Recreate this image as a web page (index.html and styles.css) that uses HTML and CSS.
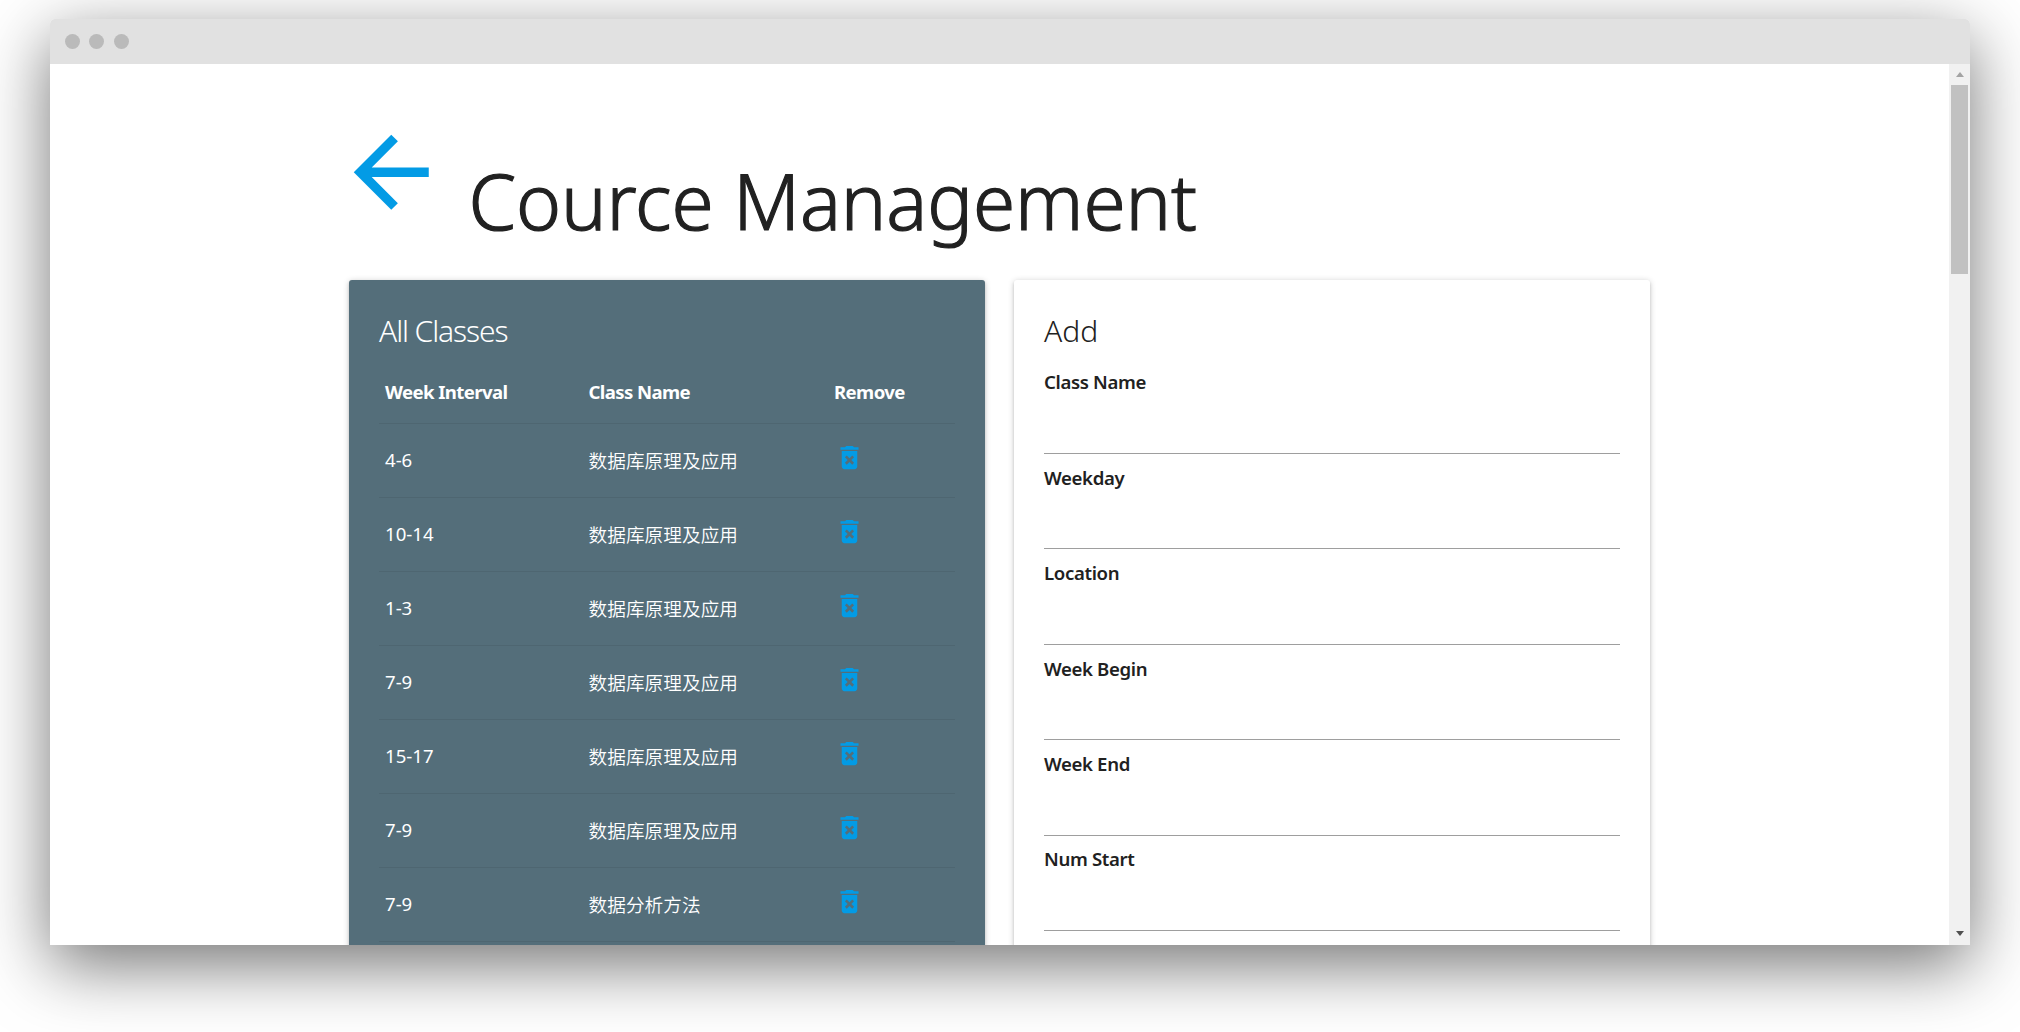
FILE: index.html
```html
<!DOCTYPE html>
<html lang="en">
<head>
<meta charset="utf-8">
<title>Cource Management</title>
<link rel="stylesheet" href="styles.css">
</head>
<body>
<svg class="defs" width="0" height="0">
  <symbol id="trash" viewBox="0 0 24 24"><path d="M6 19c0 1.100.9 2 2 2h8c1.100 0 2-.9 2-2V7H6v12zm2.460-7.120l1.410-1.410L12 12.590l2.120-2.120 1.410 1.410L13.410 14l2.120 2.120-1.410 1.410L12 15.410l-2.120 2.120-1.410-1.410L10.590 14l-2.130-2.120zM15.500 4l-1-1h-5l-1 1H5v2h14V4z"/></symbol>
</svg>
<div class="window">
  <div class="titlebar"><span class="dot"></span><span class="dot"></span><span class="dot"></span></div>
  <div class="viewport">
    <main class="page">
      <header class="heading">
        <a class="back"><svg viewBox="0 0 24 24"><path d="M20 11H7.830l5.590-5.590L12 4l-8 8 8 8 1.410-1.410L7.830 13H20v-2z"/></svg></a>
        <h1>Cource Management</h1>
      </header>
      <div class="cards">
        <section class="card card-dark">
          <h2 class="card-title">All Classes</h2>
          <div class="table">
            <div class="row head"><span>Week Interval</span><span>Class Name</span><span>Remove</span></div>
            <div class="row"><span>4-6</span><span class="zh">数据库原理及应用</span><svg><use href="#trash"/></svg></div>
            <div class="row"><span>10-14</span><span class="zh">数据库原理及应用</span><svg><use href="#trash"/></svg></div>
            <div class="row"><span>1-3</span><span class="zh">数据库原理及应用</span><svg><use href="#trash"/></svg></div>
            <div class="row"><span>7-9</span><span class="zh">数据库原理及应用</span><svg><use href="#trash"/></svg></div>
            <div class="row"><span>15-17</span><span class="zh">数据库原理及应用</span><svg><use href="#trash"/></svg></div>
            <div class="row"><span>7-9</span><span class="zh">数据库原理及应用</span><svg><use href="#trash"/></svg></div>
            <div class="row"><span>7-9</span><span class="zh">数据分析方法</span><svg><use href="#trash"/></svg></div>
            <div class="row"></div>
          </div>
        </section>
        <section class="card">
          <h2 class="card-title">Add</h2>
          <div class="field">Class Name</div>
          <div class="field">Weekday</div>
          <div class="field">Location</div>
          <div class="field">Week Begin</div>
          <div class="field">Week End</div>
          <div class="field">Num Start</div>
        </section>
      </div>
    </main>
    <div class="scrollbar"><i class="up"></i><i class="thumb"></i><i class="down"></i></div>
  </div>
</div>
</body>
</html>
```
FILE: styles.css
```css
* { box-sizing: border-box; }
body {
  margin: 0;
  height: 1032px;
  overflow: hidden;
  padding: 19px 50px 0;
  background: #fff;
  color: #212121;
  font: 400 18.6px/28px "Noto Sans", "Noto Sans CJK SC", sans-serif;
}
.defs { position: absolute; }
.window {
  height: 926px;
  border-radius: 5px 5px 0 0;
  box-shadow: 0 20px 68px rgba(0, 0, 0, .55);
}
.titlebar {
  display: flex;
  align-items: center;
  gap: 9.500px;
  height: 45px;
  padding-left: 15px;
  border-radius: 5px 5px 0 0;
  background: #e1e1e1;
}
.dot { width: 15px; height: 15px; border-radius: 50%; background: #bababa; }
.dot:nth-child(2) { margin-left: -.5px; }
.viewport { display: flex; height: 881px; overflow: hidden; background: #fff; }
.page { flex: 1; min-width: 0; padding: 52px 0 0 299px; }
.heading { display: flex; height: 163.500px; margin-left: -14px; }
.back svg { display: block; width: 112.500px; height: 112.500px; fill: #039be5; }
h1 {
  margin: 32px 0 0 21px;
  font-size: 76.500px;
  font-weight: 300;
  line-height: 104px;
  letter-spacing: -.100px;
  -webkit-text-stroke: 1.200px #212121;
  white-space: nowrap;
}
.cards { display: flex; gap: 29px; width: 1301px; }
.card {
  flex: 1;
  height: 760px;
  padding: 30px 30px 0;
  border-radius: 3px;
  background: #fff;
  box-shadow: 0 2px 3px rgba(0, 0, 0, .14), 0 3px 1px -2px rgba(0, 0, 0, .12), 0 1px 6px rgba(0, 0, 0, .2);
}
.card-dark { background: #546e7a; color: #fff; }
.card-title { margin: 0; height: 58.900px; font-size: 30px; font-weight: 300; line-height: 42px; }
.card-dark .card-title { height: 59.500px; letter-spacing: -1.100px; }
.row {
  display: grid;
  grid-template-columns: 203.500px 245.500px 1fr;
  align-items: center;
  height: 74px;
  padding-left: 6px;
  border-bottom: 1px solid #4e6671;
}
.row span { margin-top: -1px; }
.head { height: 55px; padding-bottom: 8px; font-weight: 700; letter-spacing: -.6px; }
.row svg { width: 31px; height: 31px; fill: #039be5; margin: -6px 0 0 -.5px; }
.row .zh { font-family: "Noto Sans CJK SC", sans-serif; font-weight: 350; letter-spacing: .1px; margin-top: -2px; }
.field { height: 95.400px; font-weight: 600; line-height: 28px; letter-spacing: -.35px; }
.field::after { content: ""; display: block; height: 56.600px; border-bottom: 1px solid #9e9e9e; }
.scrollbar {
  display: flex;
  flex-direction: column;
  align-items: center;
  width: 21px;
  background: #f1f1f1;
}
.up, .down { border: 4.500px solid transparent; width: 0; height: 0; }
.up { margin-top: 4px; border-bottom: 5px solid #a3a3a3; }
.thumb { width: 17px; height: 189px; margin-top: 8px; background: #c1c1c1; }
.down { margin: auto 0 5px; border-top: 5px solid #505050; }
```
